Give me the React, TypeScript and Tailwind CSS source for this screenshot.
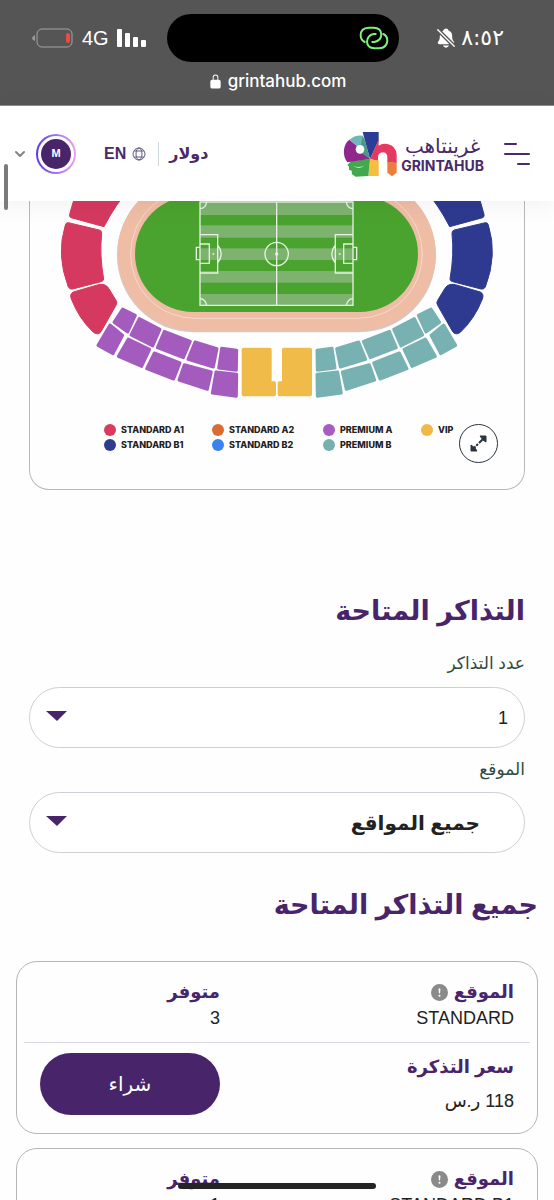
import { useState } from 'react';
import { ChevronDown } from 'lucide-react';
import { IoLockClosed, IoNotificationsOff } from 'react-icons/io5';
import { BsExclamationCircleFill } from 'react-icons/bs';

const legend = [
  { name: 'STANDARD A1', dot: 'bg-[#d93a5e]' },
  { name: 'STANDARD A2', dot: 'bg-[#dc6a35]' },
  { name: 'PREMIUM A', dot: 'bg-[#a65cc2]' },
  { name: 'VIP', dot: 'bg-[#f0b946]' },
  { name: 'STANDARD B1', dot: 'bg-[#2f3c90]' },
  { name: 'STANDARD B2', dot: 'bg-[#3a82f0]' },
  { name: 'PREMIUM B', dot: 'bg-[#76b1b0]' },
];

const tickets = [
  { location: 'STANDARD', available: 3, price: 118 },
  { location: 'STANDARD B1', available: 1, price: 118 },
];

// left half of the stands, the right half is the same shapes mirrored
const outerBlocks = [
  'M160 -40 L330 -20 Q285 30 252 95 L153 68 Q147 66 149 58 Q156 30 170 -10 Z',
  'M145 83 L238 105 Q246 107 245 116 Q238 180 251 252 Q251 258 243 260 L158 282 Q149 284 145 276 Q108 180 136 90 Q138 82 145 83 Z',
  'M160 291 L235 269 Q256 264 266 280 L288 316 Q293 323 288 331 L243 410 Q234 422 220 412 Q176 370 154 312 Q148 297 160 291 Z',
];

const premiumBlocks = [
  '308,342 346,361 323,411 282,382',
  '358,371 420,403 398,453 333,420',
  '433,409 511,439 490,488 412,458',
  '525,441 591,461 580,516 504,493',
  '605,460 650,466 649,526 596,519',
  '270,390 308,421 279,476 234,451',
  '325,432 389,463 365,514 295,484',
  '403,474 480,504 461,552 380,521',
  '493,509 574,531 562,583 477,555',
  '588,531 650,538 649,604 577,594',
];

const Stands = ({ outer, premium }: { outer: string; premium: string }) => (
  <>
    <g fill={outer} stroke={outer} strokeWidth="3" strokeLinejoin="round">
      {outerBlocks.map((d) => (
        <path key={d} d={d} />
      ))}
    </g>
    <g fill={premium} stroke={premium} strokeWidth="9" strokeLinejoin="round">
      {premiumBlocks.map((points) => (
        <polygon key={points} points={points} />
      ))}
    </g>
    <path d="M671 458 H750 Q755 458 755 464 V559 H763 Q768 559 768 565 V598 Q768 604 762 604 H671 Q665 604 665 598 V464 Q665 458 671 458 Z" fill="#f0bb48" />
  </>
);

const PitchEnd = () => (
  <>
    <path d="M540 119 H593 V234 H540 M540 147 H568 V205 H540 M540 157 H529 V194 H540 M593 150 Q614 177 593 204" />
    <path d="M560 20 Q558 40 540 41 M540 311 Q556 312 560 331" />
    <circle cx="580" cy="177" r="1" />
  </>
);

const StadiumMap = () => (
  <svg viewBox="30 18 1482 630" className="block w-full" role="img" aria-label="خريطة الملعب">
    <rect x="291" y="-50" width="957" height="462" rx="231" fill="#cfcac6" />
    <rect x="292" y="-54" width="955" height="461" rx="230" fill="#efbda6" />
    <rect x="332" y="-16" width="875" height="386" rx="193" fill="none" stroke="#f6d9cb" strokeWidth="3" />
    <rect x="345" y="3" width="849" height="348" rx="174" fill="#4ba32f" />
    <g fill="#7db36f">
      <rect x="540" y="20" width="459" height="40" />
      <rect x="540" y="91" width="459" height="37" />
      <rect x="540" y="160" width="459" height="35" />
      <rect x="540" y="228" width="459" height="35" />
      <rect x="540" y="297" width="459" height="34" />
    </g>
    <g fill="none" stroke="#e6f2e1" strokeWidth="4">
      <path d="M540 21 H999 V331 H540 Z M770 21 V331" />
      <circle cx="770" cy="177" r="35" />
      <circle cx="770" cy="177" r="3" />
      <PitchEnd />
      <g transform="translate(1539 0) scale(-1 1)">
        <PitchEnd />
      </g>
    </g>
    <Stands outer="#d5395f" premium="#a35cbe" />
    <g transform="translate(1541 0) scale(-1 1)">
      <Stands outer="#2e3a8f" premium="#77b1b1" />
    </g>
  </svg>
);

const StatusBar = () => (
  <div className="bg-[#555555] text-white border-b border-[#8f8b8f] pt-[14px] h-[106px]" dir="ltr">
    <div className="flex items-center pl-8 pr-[50px]">
      <svg width="42" height="20" viewBox="0 0 42 20" fill="none" aria-hidden="true">
        <path d="M3 7 Q0 9 0 10 Q0 12 3 13 Z" fill="#9a9a9a" />
        <rect x="5" y="1" width="35" height="18" rx="5" stroke="#a5a5a5" />
        <rect x="34" y="5" width="4" height="10" rx="2" fill="#ee4a3f" />
      </svg>
      <span className="ml-2 text-[20px] leading-6">4G</span>
      <svg className="ml-2 shrink-0" width="30" height="18" viewBox="0 0 30 18" fill="#fff" aria-hidden="true">
        <rect x="0" y="0" width="5" height="18" rx="1" />
        <rect x="8" y="4" width="5" height="14" rx="1" />
        <rect x="16" y="8" width="5" height="10" rx="1" />
        <rect x="24" y="11" width="5" height="7" rx="1" />
      </svg>
      <div className="flex-1 ml-5 mr-9 h-12 rounded-full bg-black flex items-center justify-end pr-[10px]">
        <svg width="30" height="24" viewBox="0 0 90 72" fill="none" stroke="#7df07c" strokeWidth="6" strokeLinecap="round" aria-hidden="true">
          <path d="M17 48 Q5 42 5 28 Q5 6 29 5 H44 Q66 6 67 25 Q66 44 46 48 H40" />
          <path d="M73 24 Q85 30 85 44 Q84 66 60 67 H46 Q25 66 24 47 Q25 28 44 24 H50" />
        </svg>
      </div>
      <IoNotificationsOff size={22} />
      <span className="ml-1 text-[22px] leading-7 font-['DejaVu_Sans',sans-serif]">٨:٥٢</span>
    </div>
    <div className="flex items-center justify-center gap-[5px] mt-[7px]">
      <IoLockClosed size={15} />
      <span className="text-[17px] leading-6 font-medium font-['Inter',sans-serif]">grintahub.com</span>
    </div>
  </div>
);

const LogoMark = () => (
  <svg width="54" height="46" viewBox="67 74 162 138" aria-hidden="true">
    <path d="M126 77 H174 V102 L148 158 L132 100 Z" fill="#2c3d97" />
    <path d="M174 100 L148 158 L172 164 V150 Q174 138 188 138 Q200 140 200 152 V168 L228 170 V145 Q226 118 200 113 Q184 110 174 118 Z" fill="#e5395f" />
    <path d="M200 166 L228 170 V199 L214 210 L200 199 Z" fill="#ee7d3b" />
    <path d="M148 158 L174 163 V209 H143 Z" fill="#f6bd3f" />
    <path d="M148 158 L143 209 L105 211 L94 204 L93 193 L85 190 V181 L80 176 L92 164 Z" fill="#41a94b" />
    <path d="M148 158 L80 168 Q66 150 71 124 Q75 108 86 100 L110 120 Z" fill="#90278e" />
    <path d="M86 100 Q104 84 126 88 L133 106 L116 124 Z" fill="#6fb8b7" />
    <path d="M126 90 L133 102 L148 158 L116 136 Z" fill="#4b9a84" />
    <circle cx="118" cy="129" r="13" fill="#fff" />
    <path d="M96 178 Q114 186 130 178 Q116 190 96 178 Z" fill="#fff" />
  </svg>
);

const Header = () => (
  <header className="relative z-10 bg-white h-[95px] pr-6 pl-3 flex items-center shadow-[0_4px_24px_rgba(0,0,0,0.05)]">
    <button aria-label="القائمة">
      <svg width="26" height="24" viewBox="0 0 26 24" stroke="#482a6a" strokeWidth="2" strokeLinecap="round" aria-hidden="true">
        <path d="M1 2 H12 M1 12 H25 M14 22 H25" />
      </svg>
    </button>
    <a href="#" className="flex items-center gap-1 mr-5 text-[#482a6a]">
      <span className="flex flex-col items-center">
        <span className="text-[20px] leading-6 font-['DejaVu_Sans',sans-serif]">غرينتاهب</span>
        <span className="text-[14px] leading-4 font-bold font-['Inter',sans-serif]">GRINTAHUB</span>
      </span>
      <LogoMark />
    </a>
    <div className="flex items-center mr-auto text-[#482a6a]">
      <button className="text-[16px] leading-6 font-bold">دولار</button>
      <span className="w-px h-6 bg-gray-300 mr-[10px] ml-3" />
      <button className="flex items-center gap-[6px] text-[16px] leading-6 font-bold">
        <svg width="14" height="14" viewBox="0 0 14 14" fill="none" stroke="#5f5b82" aria-hidden="true">
          <circle cx="7" cy="7" r="6" />
          <ellipse cx="7" cy="7" rx="3" ry="6" />
          <path d="M2 4 H12 M2 10 H12" />
        </svg>
        EN
      </button>
      <button className="flex items-center gap-2 mr-7" aria-label="الحساب">
        <span className="size-10 rounded-full p-[2px] bg-linear-to-r from-[#5a35e8] to-[#f0a0f2]">
          <span className="size-9 rounded-full bg-white flex items-center justify-center">
            <span className="size-[30px] rounded-full bg-[#48256b] text-white text-[11px] font-bold flex items-center justify-center">M</span>
          </span>
        </span>
        <ChevronDown size={16} strokeWidth={3} className="text-[#858585]" />
      </button>
    </div>
  </header>
);

const SelectArrow = () => (
  <svg className="absolute left-[17px] top-6 pointer-events-none" width="21" height="10" viewBox="0 0 21 10" aria-hidden="true">
    <path d="M0 0 H21 L11 10 Z" fill="#48256b" />
  </svg>
);

const TicketCard = ({ location, available, price }: { location: string; available: number; price: number }) => (
  <article className="border border-[#b5b5b5] rounded-[21px] px-[7px] text-[#222]">
    <div className="flex justify-between px-4 pt-4 pb-3 border-b border-[#d8d8e0]">
      <div>
        <h3 className="flex items-center gap-[6px] text-[18px] leading-7 font-bold text-[#48256b]">
          الموقع
          <BsExclamationCircleFill size={17} className="text-[#8a8a8a]" />
        </h3>
        <p className="text-lg leading-6">{location}</p>
      </div>
      <div className="w-[180px]">
        <h3 className="text-[18px] leading-7 font-bold text-[#48256b]">متوفر</h3>
        <p className="text-lg leading-6">{available}</p>
      </div>
    </div>
    <div className="flex justify-between items-start px-4 pt-[10px] pb-3">
      <div>
        <h3 className="text-[18px] leading-7 font-bold text-[#48256b]">سعر التذكرة</h3>
        <p className="text-lg leading-10">{price} ر.س</p>
      </div>
      <button className="w-[180px] h-[62px] rounded-full bg-[#48256b] text-white text-[20px]">شراء</button>
    </div>
  </article>
);

export default function App() {
  const [count, setCount] = useState('1');
  const [location, setLocation] = useState('all');

  return (
    <div dir="rtl" className="relative h-screen overflow-hidden flex flex-col bg-[#fefefe] font-['Liberation_Sans','DejaVu_Sans',sans-serif]">
      <StatusBar />
      <Header />

      <main className="flex-1 min-h-0 overflow-hidden">
        <section className="px-[29px]">
          <div className="relative border border-t-0 border-[#b9b9b9] rounded-b-[20px] pb-[38px]">
            <StadiumMap />
            <ul dir="ltr" className="grid grid-cols-[108px_111px_98px_auto] gap-y-[3px] mt-[13px] pl-[74px] font-['Inter',sans-serif]">
              {legend.map((item) => (
                <li key={item.name} className="flex items-center gap-[5px] text-[9px] leading-3 font-extrabold text-[#222]">
                  <span className={`size-3 rounded-full ${item.dot}`} />
                  {item.name}
                </li>
              ))}
            </ul>
            <button aria-label="تكبير" className="absolute right-[26px] bottom-[26px] size-[39px] rounded-full border border-[#2b3440] bg-white flex items-center justify-center">
              <svg width="17" height="17" viewBox="0 0 17 17" fill="none" stroke="#2b3440" strokeWidth="2" aria-hidden="true">
                <path d="M2 15 L8 9 M9 8 L15 2" strokeDasharray="5 1" />
                <path d="M10 1 H16 V7 L13 5 Z M1 10 V16 H7 L5 13 Z" fill="#2b3440" strokeWidth="1" />
              </svg>
            </button>
          </div>
        </section>

        <section className="px-[29px] pt-[101px]">
          <h2 className="text-[27px] leading-10 font-bold text-[#48256b]">التذاكر المتاحة</h2>
          <label htmlFor="count" className="block mt-[21px] mb-[11px] text-[17px] leading-6 text-[#2d4a44]">عدد التذاكر</label>
          <div className="relative">
            <select
              id="count"
              value={count}
              onChange={(e) => setCount(e.target.value)}
              className="block w-full h-[61px] rounded-full border border-[#cdd0d8] bg-white appearance-none pr-4 pl-12 text-lg text-[#222]"
            >
              <option value="1">1</option>
              <option value="2">2</option>
              <option value="3">3</option>
            </select>
            <SelectArrow />
          </div>
          <label htmlFor="location" className="block my-[10px] text-[17px] leading-6 text-[#2d4a44]">الموقع</label>
          <div className="relative">
            <select
              id="location"
              value={location}
              onChange={(e) => setLocation(e.target.value)}
              className="block w-full h-[61px] rounded-full border border-[#cdd0d8] bg-white appearance-none pr-11 pl-12 text-[20px] font-bold text-[#222]"
            >
              <option value="all">جميع المواقع</option>
              <option value="standard">STANDARD</option>
              <option value="b1">STANDARD B1</option>
            </select>
            <SelectArrow />
          </div>
        </section>

        <section className="px-4 pt-8">
          <h2 className="text-[27px] leading-10 font-bold text-[#48256b]">جميع التذاكر المتاحة</h2>
          <div className="flex flex-col gap-[14px] mt-9">
            {tickets.map((ticket) => (
              <TicketCard key={ticket.location} {...ticket} />
            ))}
          </div>
        </section>
      </main>

      {/* scroll thumb and home indicator float over the page */}
      <div className="absolute z-20 left-1 top-[164px] w-1 h-[46px] rounded-full bg-[#7b7b7b]" />
      <div className="absolute z-20 inset-x-0 bottom-[11px] flex justify-center">
        <div className="w-[198px] h-[6px] rounded-full bg-[#242424]" />
      </div>
    </div>
  );
}
